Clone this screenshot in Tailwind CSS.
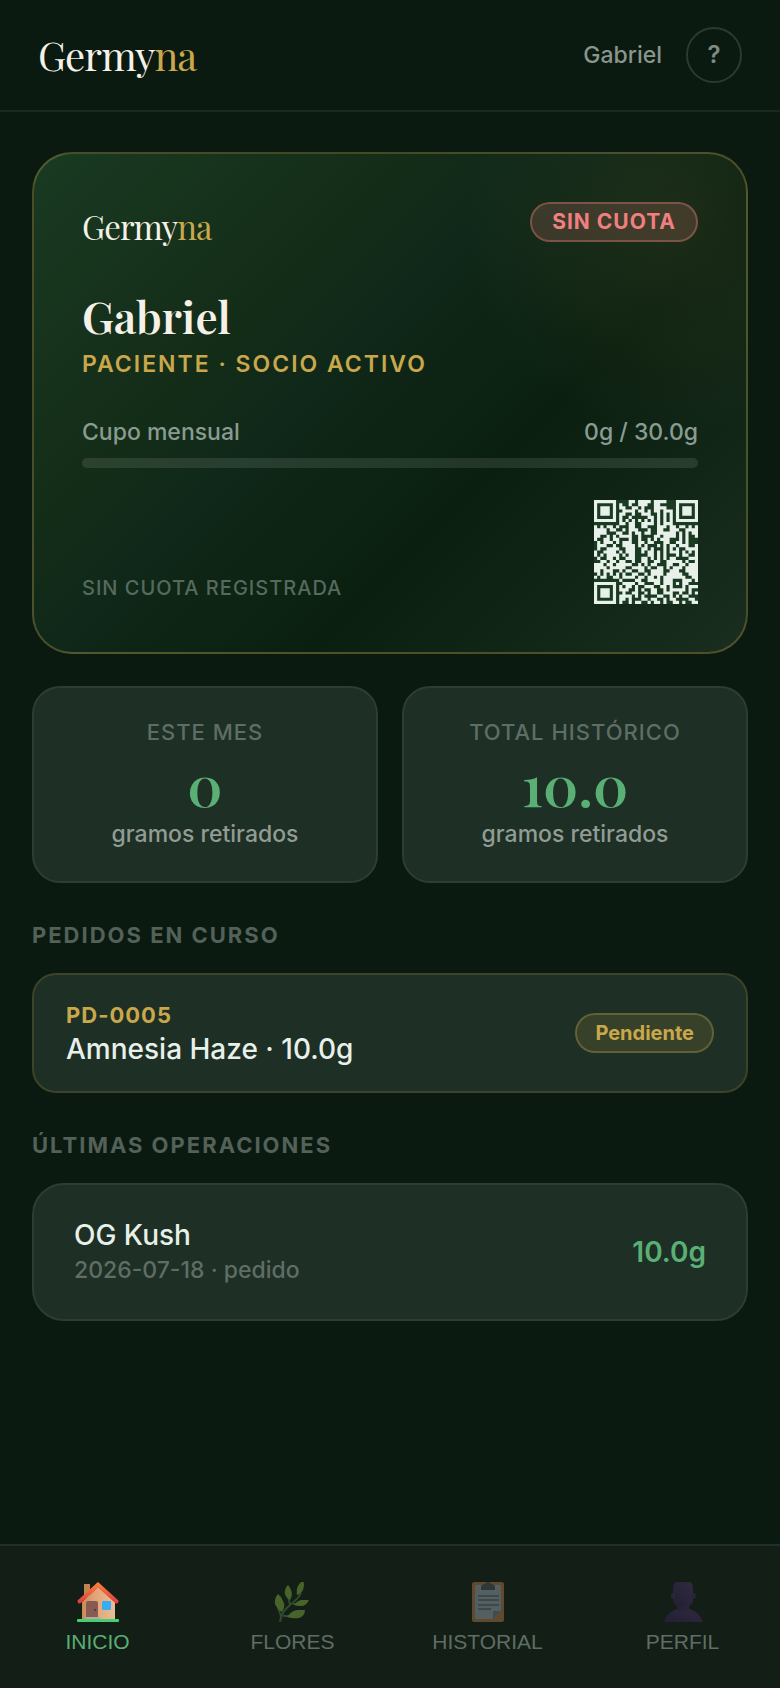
<!DOCTYPE html>
<html lang="es">
<head>
    <meta charset="UTF-8">
    <meta name="viewport" content="width=device-width, initial-scale=1.0">
    <title>Germyna - Inicio</title>
    <script src="https://cdn.jsdelivr.net/npm/@tailwindcss/browser@4"></script>
</head>
<body class="bg-[#0a1a10] text-[#e8f0ea] font-['Inter',sans-serif] flex flex-col min-h-screen">
    <!-- Header -->
    <header class="flex items-center justify-between px-[38px] py-[27px] border-b-2 border-[#1b2a21]">
        <a href="#" class="font-['Playfair_Display','Liberation_Serif',serif] text-[40px] leading-[56px] tracking-[-1px] text-[#f5f0e8]">Germy<span class="text-[#c9a84c]">na</span></a>
        <div class="flex items-center gap-6">
            <span class="text-[23px] font-medium text-[#8a958d]">Gabriel</span>
            <button type="button" aria-label="Ayuda" class="size-14 rounded-full border-2 border-[#2b3a30] text-2xl font-semibold text-[#7f8b83]">?</button>
        </div>
    </header>

    <main class="flex-grow px-8 pt-10 pb-8">
        <!-- Member card -->
        <section class="rounded-[40px] border-2 border-[#c9a84c]/30 p-12 bg-[radial-gradient(circle_210px_at_90%_14%,rgba(201,168,76,0.09),transparent),linear-gradient(135deg,#1a3a22_0%,#142d18_30%,#102819_42%,#0a1f10_64%,#1a2e20_100%)]">
            <div class="flex items-start justify-between">
                <div class="font-['Playfair_Display','Liberation_Serif',serif] text-[33px] leading-[48px] tracking-[-1px] text-[#f5f0e8]">Germy<span class="text-[#c9a84c]">na</span></div>
                <span class="rounded-full border-2 border-[#f08080]/35 bg-[#f08080]/18 px-5 text-[21px] leading-9 font-bold tracking-[1px] text-[#f08080]">SIN CUOTA</span>
            </div>
            <h1 class="mt-9 font-['Playfair_Display','Liberation_Serif',serif] text-[44px] leading-[60px] font-semibold text-[#f5f0e8]">Gabriel</h1>
            <p class="text-[23px] leading-9 font-semibold tracking-[2px] text-[#c9a84c]">PACIENTE · SOCIO ACTIVO</p>
            <div class="mt-8 flex justify-between text-[23px] leading-9 font-medium text-[#8a9b90]">
                <span>Cupo mensual</span>
                <span>0g / 30.0g</span>
            </div>
            <div class="mt-2 h-[10px] rounded-full bg-white/10"></div>
            <div class="mt-8 flex items-end justify-between">
                <span class="text-xl leading-8 font-medium tracking-[1px] text-[#566a5c]">SIN CUOTA REGISTRADA</span>
                <svg id="qr" class="size-[104px] bg-[#1a3a22]" viewBox="0 0 33 33" role="img" aria-label="Código QR">
                    <path fill="#e8f0ea"/>
                </svg>
            </div>
        </section>

        <!-- Totals -->
        <section class="mt-8 grid grid-cols-2 gap-6 text-center">
            <div class="rounded-[28px] border-2 border-[#2d3d34] bg-[#1e2f25] pt-7 pb-[29px]">
                <p class="text-[22px] leading-8 font-medium tracking-[1px] text-[#5f6e65]">ESTE MES</p>
                <p class="mt-1 font-['Playfair_Display','Liberation_Serif',serif] text-[56px] leading-[64px] font-semibold text-[#5aaf74]">0</p>
                <p class="text-[23px] leading-9 font-medium text-[#919c94]">gramos retirados</p>
            </div>
            <div class="rounded-[28px] border-2 border-[#2d3d34] bg-[#1e2f25] pt-7 pb-[29px]">
                <p class="text-[22px] leading-8 font-medium tracking-[1px] text-[#5f6e65]">TOTAL HISTÓRICO</p>
                <p class="mt-1 font-['Playfair_Display','Liberation_Serif',serif] text-[56px] leading-[64px] font-semibold text-[#5aaf74]">10.0</p>
                <p class="text-[23px] leading-9 font-medium text-[#919c94]">gramos retirados</p>
            </div>
        </section>

        <!-- Orders -->
        <h2 class="mt-[34px] text-[22px] leading-9 font-bold tracking-[2px] text-[#536158]">PEDIDOS EN CURSO</h2>
        <section class="mt-5 flex items-center justify-between rounded-3xl border-2 border-[#3d4329] bg-[#1e2f25] px-8 py-6">
            <div>
                <p class="text-[22px] leading-8 font-bold tracking-[1px] text-[#c9a84c]">PD-0005</p>
                <p class="text-[28px] leading-9 font-medium">Amnesia Haze · 10.0g</p>
            </div>
            <span class="rounded-full border-2 border-[#c9a84c]/30 bg-[#c9a84c]/15 px-[18px] text-xl leading-9 font-bold text-[#c9a84c]">Pendiente</span>
        </section>

        <h2 class="mt-[34px] text-[22px] leading-9 font-bold tracking-[2px] text-[#536158]">ÚLTIMAS OPERACIONES</h2>
        <section class="mt-5 flex items-center justify-between rounded-[32px] border-2 border-[#2d3d34] bg-[#1e2f25] px-10 py-8">
            <div>
                <p class="text-[28px] leading-9 font-medium">OG Kush</p>
                <p class="text-[23px] leading-[34px] font-medium text-[#5f6e65]">2026-07-18 · pedido</p>
            </div>
            <span class="text-[28px] leading-9 font-semibold text-[#5aaf74]">10.0g</span>
        </section>
    </main>

    <!-- Bottom navigation -->
    <nav class="grid grid-cols-4 border-t-2 border-[#233029] bg-[#131f16] pt-9 pb-8 font-['Liberation_Sans',sans-serif] text-[21px] leading-7 text-[#5f6d64]">
        <a href="#inicio" class="flex flex-col items-center gap-1 text-[#5aaf74]">
            <svg class="size-[42px]" viewBox="0 0 42 42">
                <defs>
                    <linearGradient id="wall" x1="0" x2="1"><stop stop-color="#c98b55"/><stop offset=".4" stop-color="#e3a577"/><stop offset="1" stop-color="#e8be96"/></linearGradient>
                    <linearGradient id="roof" x1="0" x2="0" y1="0" y2="1"><stop stop-color="#ff843b"/><stop offset="1" stop-color="#e03a3e"/></linearGradient>
                </defs>
                <path d="M7 2h6v14H7z" fill="#c08450"/>
                <path d="M5 20 21 5l17 15v18H5z" fill="url(#wall)"/>
                <path d="M21 0 .6 18.500q-.4 3.500 2.600 3L21 5.500 38.800 21.500q3 .5 2.600-3z" fill="url(#roof)"/>
                <rect x="9" y="19" width="12" height="18" rx="2" fill="#875a52"/>
                <circle cx="18" cy="28" r="1" fill="#4f302e"/>
                <rect x="25" y="19" width="9" height="9" rx="1" fill="#37aef4"/>
                <path d="M9 35h14v2H9z" fill="#b8a8a0"/>
                <rect x="0" y="37" width="42" height="3" rx="1" fill="#43cf72"/>
            </svg>
            INICIO
        </a>
        <a href="#flores" class="flex flex-col items-center gap-1">
            <svg class="size-[42px]" viewBox="0 0 42 42">
                <path d="M8 40Q9 30 18 23T29 11M9 34l-3-8M18 23l-2-10M11 34h8M21 22h9" fill="none" stroke="#304a2c" stroke-width="2"/>
                <g fill="#48642b">
                    <path d="M6 12q-4 5-3 10 2 5 7 8 4-6 1-11-2-5-5-7z"/>
                    <path d="M16 3q-4 4-3 9 1 4 5 6 3-5 1-10-1-3-3-5z"/>
                    <path d="M31-1q2 3 0 9-2 4-6 5-1-5 1-9 2-4 5-5z"/>
                    <path d="M37 18q-3 6-8 6-5 0-7-1 4-5 8-5z"/>
                    <path d="M33 28q0 6-6 8-6 1-12-1 4-6 10-7z"/>
                </g>
            </svg>
            FLORES
        </a>
        <a href="#historial" class="flex flex-col items-center gap-1">
            <svg class="size-[42px]" viewBox="0 0 42 42">
                <rect x="5" y="0" width="32" height="40" rx="2" fill="#60492e"/>
                <path d="M8 4q0-1 1-1h24q1 0 1 1v25l-8 8H9q-1 0-1-1z" fill="#535f60"/>
                <path d="M26 37v-8h8z" fill="#424c4e"/>
                <path d="M14 8V5q0-2 3-3l2-.5Q19-1 21-1t2 2.500l2 .5q3 1 3 3v3z" fill="#303737"/>
                <path d="M11 14h21M11 18h21M11 23h21M11 27h13" stroke="#364142" stroke-width="1.500"/>
            </svg>
            HISTORIAL
        </a>
        <a href="#perfil" class="flex flex-col items-center gap-1">
            <svg class="size-[42px]" viewBox="0 0 42 42">
                <defs>
                    <linearGradient id="skin" x1="0" x2="1" y1="1" y2="0"><stop stop-color="#221f31"/><stop offset="1" stop-color="#302a42"/></linearGradient>
                </defs>
                <g fill="url(#skin)">
                    <path d="M2 40Q6 27 21 26q15 1 20 14z"/>
                    <path d="M15 21h12v7H15z"/>
                    <path d="M11 7q0-8 7-8h7q6 0 6 8v10q0 8-10 8t-10-8z"/>
                    <ellipse cx="11" cy="14" rx="2" ry="3"/>
                    <ellipse cx="31.500" cy="14" rx="2" ry="3"/>
                </g>
            </svg>
            PERFIL
        </a>
    </nav>

    <script>
        // one string per row, # is a light module
        const modules = [
            '#######....##.####.####...#######',
            '#.....#.#..#..###..##.....#.....#',
            '#.###.#.##..##.#...####...#.###.#',
            '#.###.#..####.##.#.##.###.#.###.#',
            '#.###.#.##..#..###..#.#.#.#.###.#',
            '#.....#.#..#.....##.#.#.#.#.....#',
            '#######.#.#.#.#.#.#.#.#.#.#######',
            '........##.##..####.#.###........',
            '#.#.##.#...##..##...###.##.##.#.#',
            '####.##..#.###...#..##..###..####',
            '####...##..#.##.##..######.#.#.##',
            '##..#.#.####..#....##.####.#.#..#',
            '#..##.##...#..#..#.#.###...#.#...',
            '.#.###.#.###..##.##...##..##.#...',
            '.###..#..####.#.#...#.#.##.###..#',
            '.#..####..###..##.#...#.#.#..####',
            '#..####.#.###..#.##.#.#.###.#.#.#',
            '#.#.####.#.##....##.#.#...#.##..#',
            '.#..##.#..###..##.#.#.#.##....###',
            '..##.##.##..#..##..##..#####.#..#',
            '###.##.#####..#.#.##...##..##.###',
            '####.#####..####.#..##.#.###.####',
            '##.###..#.##..##..####..###..####',
            '.#.#.#.#.#..##..#.####.#####..###',
            '#.##..##.####.##.##.#.#######..##',
            '........#....##..####.###...###.#',
            '#######..####.##...##.###.#.##...',
            '#.....#.#.##.#..###..##.#...#.###',
            '#.###.#.###..#.#..##..#.#####.#..',
            '#.###.#..#..##..#.##..###..#..#.#',
            '#.###.#.####.#.#....##..#.#.##...',
            '#.....#.##.#...##.##..#.##....##.',
            '#######.#..#.##..#.##.#..##.#..##'
        ];
        const d = modules.map((row, y) => [...row].map((m, x) => m === '#' ? `M${x} ${y}h1v1h-1z` : '').join('')).join('');
        document.querySelector('#qr path').setAttribute('d', d);
    </script>
</body>
</html>
